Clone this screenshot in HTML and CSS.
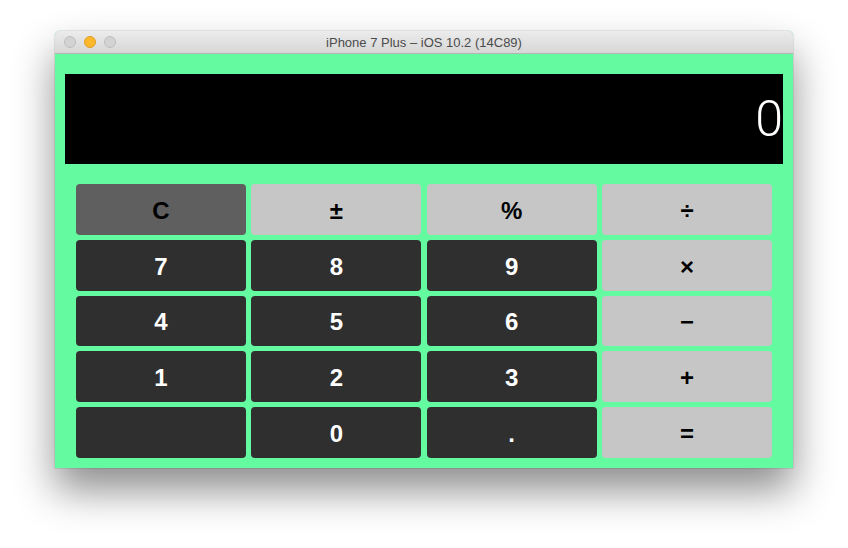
FILE: index.html
```html
<!DOCTYPE html>
<html>
<head>
<meta charset="utf-8">
<link rel="stylesheet" href="styles.css">
</head>
<body>
<div class="desk">
  <div class="window">
    <div class="titlebar">
      <div class="dots">
        <span class="dot gray"></span>
        <span class="dot orange"></span>
        <span class="dot gray"></span>
      </div>
      <div class="title">iPhone 7 Plus – iOS 10.2 (14C89)</div>
    </div>
    <div class="screen">
      <div class="display">0</div>
      <div class="keys">
        <div class="key mid">C</div>
        <div class="key op">±</div>
        <div class="key op">%</div>
        <div class="key op">÷</div>
        <div class="key dark">7</div>
        <div class="key dark">8</div>
        <div class="key dark">9</div>
        <div class="key op">×</div>
        <div class="key dark">4</div>
        <div class="key dark">5</div>
        <div class="key dark">6</div>
        <div class="key op">−</div>
        <div class="key dark">1</div>
        <div class="key dark">2</div>
        <div class="key dark">3</div>
        <div class="key op">+</div>
        <div class="key dark"></div>
        <div class="key dark">0</div>
        <div class="key dark">.</div>
        <div class="key op">=</div>
      </div>
    </div>
  </div>
</div>
</body>
</html>
```

FILE: styles.css
```css
html, body {
  margin: 0;
  padding: 0;
  background: #ffffff;
}
body {
  min-height: 548px;
}
.desk {
  padding: 31px 0 80px 55px;
}
.window {
  width: 738px;
  border-radius: 5px 5px 0 0;
  box-shadow: 0 22px 40px rgba(0, 0, 0, 0.45), 0 0 0 1px rgba(0, 0, 0, 0.08);
  background: #62f9a0;
}
.titlebar {
  height: 22px;
  border-bottom: 1px solid #b4b4b4;
  border-radius: 5px 5px 0 0;
  background: linear-gradient(#ececec, #d6d6d6);
  display: flex;
  align-items: center;
}
.dots {
  display: flex;
  gap: 8px;
  padding-left: 9px;
}
.dot {
  width: 12px;
  height: 12px;
  border-radius: 50%;
  box-sizing: border-box;
}
.dot.gray {
  background: #d3d3d3;
  border: 1px solid #bdbdbd;
}
.dot.orange {
  background: #fcb72b;
  border: 1px solid #e0a023;
}
.title {
  flex: 1;
  text-align: center;
  margin-left: -61px;
  font-family: "Liberation Sans", Arial, sans-serif;
  font-size: 13px;
  color: #4b4b4b;
}
.screen {
  margin: 0 1px;
  height: 414px;
  background: #64fa9f;
  padding: 20px 9px 10px 9px;
  box-sizing: border-box;
  display: flex;
  flex-direction: column;
}
.display {
  height: 90px;
  background: #000000;
  color: #ffffff;
  font-family: Roboto, "Open Sans", sans-serif;
  font-weight: 300;
  font-size: 50px;
  line-height: 90px;
  text-align: right;
  flex: none;
}
.keys {
  margin: 20px 11px 0 11px;
  flex: 1;
  display: grid;
  grid-template-columns: repeat(4, 1fr);
  grid-template-rows: repeat(5, 1fr);
  gap: 5px 5.3px;
}
.key {
  border-radius: 4px;
  display: flex;
  align-items: center;
  justify-content: center;
  padding-top: 3px;
  box-sizing: border-box;
  font-family: "Liberation Sans", Arial, sans-serif;
  font-weight: bold;
  font-size: 24px;
}
.key.dark {
  background: #2f2f2f;
  color: #ffffff;
}
.key.op {
  background: #c6c6c6;
  color: #000000;
}
.key.mid {
  background: #5f5f5f;
  color: #000000;
}
```
